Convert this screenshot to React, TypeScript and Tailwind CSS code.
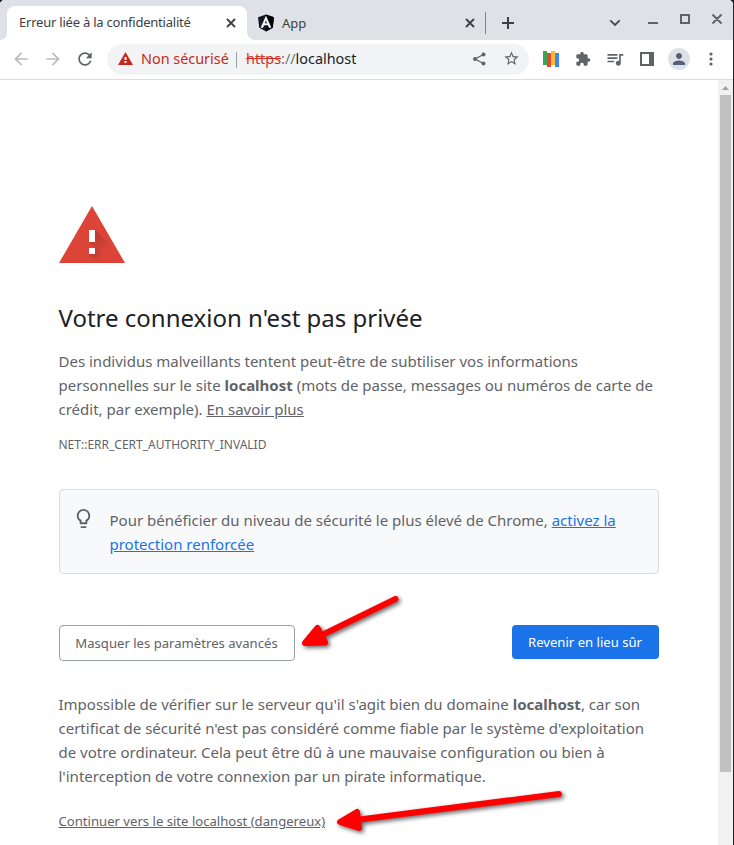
import type { ReactNode } from "react";

type IconProps = { d: string; size: number; className?: string };

function Icon({ d, size, className }: IconProps) {
  return (
    <svg width={size} height={size} viewBox="0 0 24 24" fill="currentColor" className={className}>
      <path d={d} />
    </svg>
  );
}

const icons = {
  back: "M20 11H7.83l5.59-5.59L12 4l-8 8 8 8 1.41-1.41L7.83 13H20v-2z",
  forward: "M12 4l-1.41 1.41L16.17 11H4v2h12.17l-5.58 5.59L12 20l8-8z",
  reload:
    "M17.65 6.35C16.2 4.9 14.21 4 12 4c-4.42 0-7.99 3.58-7.99 8s3.57 8 7.99 8c3.73 0 6.84-2.55 7.73-6h-2.08c-.82 2.33-3.04 4-5.65 4-3.31 0-6-2.69-6-6s2.69-6 6-6c1.66 0 3.14.69 4.22 1.78L13 11h7V4l-2.35 2.35z",
  star: "M22 9.24l-7.19-.62L12 2 9.19 8.63 2 9.24l5.46 4.73L5.82 21 12 17.27 18.18 21l-1.63-7.03L22 9.24zM12 15.4l-3.76 2.27 1-4.28-3.32-2.88 4.38-.38L12 6.1l1.71 4.04 4.38.38-3.32 2.88 1 4.28L12 15.4z",
  extension:
    "M20.5 11H19V7c0-1.1-.9-2-2-2h-4V3.5C13 2.12 11.88 1 10.5 1S8 2.12 8 3.5V5H4c-1.1 0-1.99.9-1.99 2v3.8H3.5c1.49 0 2.7 1.21 2.7 2.7s-1.21 2.7-2.7 2.7H2V20c0 1.1.9 2 2 2h3.8v-1.5c0-1.49 1.21-2.7 2.7-2.7 1.49 0 2.7 1.21 2.7 2.7V22H17c1.1 0 2-.9 2-2v-4h1.5c1.38 0 2.5-1.12 2.5-2.5S21.88 11 20.5 11z",
  queue:
    "M15 6H3v2h12V6zm0 4H3v2h12v-2zM3 16h8v-2H3v2zM17 6v8.18c-.31-.11-.65-.18-1-.18-1.66 0-3 1.34-3 3s1.34 3 3 3 3-1.34 3-3V8h3V6h-5z",
  person:
    "M12 12c2.21 0 4-1.79 4-4s-1.79-4-4-4-4 1.79-4 4 1.79 4 4 4zm0 2c-2.67 0-8 1.34-8 4v2h16v-2c0-2.66-5.33-4-8-4z",
  bulb: "M9 21c0 .55.45 1 1 1h4c.55 0 1-.45 1-1v-1H9v1zm3-19C8.14 2 5 5.14 5 9c0 2.38 1.19 4.47 3 5.74V17c0 .55.45 1 1 1h6c.55 0 1-.45 1-1v-2.26c1.81-1.27 3-3.36 3-5.74 0-3.86-3.14-7-7-7zm2.85 11.1l-.85.6V16h-4v-2.3l-.85-.6C7.8 12.16 7 10.63 7 9c0-2.76 2.24-5 5-5s5 2.24 5 5c0 1.63-.8 3.16-2.15 4.1z",
};

function Cross({ size, width }: { size: number; width: number }) {
  return (
    <svg width={size} height={size} viewBox={`0 0 ${size} ${size}`} stroke="currentColor" strokeWidth={width}>
      <path d={`M1 1L${size - 1} ${size - 1}M${size - 1} 1L1 ${size - 1}`} />
    </svg>
  );
}

function Slot({ children }: { children: ReactNode }) {
  return <div className="flex w-8 shrink-0 items-center justify-center">{children}</div>;
}

function TabStrip() {
  return (
    <div className="flex h-10 shrink-0 bg-[#dee1e6] text-[#3c4043]">
      <div className="flex w-[7px] bg-white">
        <div className="flex-1 rounded-br-lg bg-[#dee1e6]" />
      </div>
      <div className="flex w-60 bg-[#dee1e6] pt-1.5">
        <div className="flex flex-1 items-center justify-between rounded-t-lg bg-white pr-[11px] pl-3">
          <span className="text-[13px] tracking-[-0.22px] whitespace-nowrap">Erreur liée à la confidentialité</span>
          <Cross size={10} width={1.8} />
        </div>
      </div>
      <div className="flex flex-1 bg-white">
        <div className="flex flex-1 rounded-bl-lg bg-[#dee1e6] pt-1.5">
          <div className="flex w-[239px] items-center border-r border-[#808488] pr-2.5 pl-2.5 [border-image:linear-gradient(to_bottom,transparent_7px,#808488_7px,#808488_27px,transparent_27px)_1]">
            <svg width="18" height="18" viewBox="20 25 210 210">
              <path fill="#111827" d="M125 30 31.9 63.2l14.2 123.1L125 230l78.9-43.7 14.2-123.1z" />
              <path fill="#000000" d="M125 30v200l78.9-43.7 14.2-123.1z" />
              <path
                fill="#ffffff"
                stroke="#ffffff"
                strokeWidth="6"
                d="M125 52.1L66.8 182.6h21.7l11.7-29.2h49.4l11.7 29.2H183L125 52.1zm17 83.3h-34l17-40.9 17 40.9z"
              />
            </svg>
            <span className="mt-px ml-[7px] flex-1 text-[13px]">App</span>
            <Cross size={10} width={1.8} />
          </div>
          <div className="flex flex-1 items-center pl-4">
            <svg width="12" height="12" viewBox="0 0 12 12" stroke="#3c4043" strokeWidth="2">
              <path d="M6 0v12M0 6h12" />
            </svg>
          </div>
          <div className="flex h-[34px] w-[134px] text-[#5f6368]">
            <svg width="134" height="34" fill="none" stroke="currentColor" strokeWidth="2">
              <path stroke="#45494d" strokeWidth="1.8" d="M11.3 14.3l4.7 4.7 4.7-4.7" />
              <path d="M49 17h10M82 9h8v8h-8zM113.500 8.500l9 9M122.500 8.500l-9 9" />
            </svg>
          </div>
        </div>
      </div>
    </div>
  );
}

function Toolbar() {
  return (
    <div className="flex h-10 shrink-0 border-b border-[#dadce0] bg-white pb-px pl-[5px] text-[#5f6368]">
      <Slot>
        <Icon d={icons.back} size={20} className="text-[#babcbe]" />
      </Slot>
      <Slot>
        <Icon d={icons.forward} size={20} className="text-[#babcbe]" />
      </Slot>
      <Slot>
        <Icon d={icons.reload} size={20} />
      </Slot>
      <div className="mt-1 ml-1.5 flex h-[31px] w-[422px] items-center rounded-full bg-[#f1f3f4] pr-2.5 pl-[11px] text-[14.400px]">
        <svg width="15" height="13" viewBox="0 0 15 13" className="-mt-[3px]">
          <path d="M7.500 0L15 13H0z" fill="#c5281c" />
          <path d="M6.500 5h2v3h-2zM6.500 9h2v2h-2z" fill="#fff" />
        </svg>
        <span className="-mt-0.5 ml-2 w-[95px] whitespace-nowrap text-[#c5281c]">Non sécurisé</span>
        <span className="h-4 w-px bg-[#9aa0a6]" />
        <span className="-mt-0.5 ml-[9px] flex-1 text-[#202124]">
          <span className="text-[#d93025] line-through">https</span>
          <span className="text-[#6f7377]">://</span>localhost
        </span>
        <svg width="14" height="14" viewBox="0 0 14 14" className="-mt-0.5 mr-[17px]" fill="currentColor">
          <path d="M11.500 2.500L3 7l8.500 4.500" fill="none" stroke="currentColor" strokeWidth="1.300" />
          <circle cx="3" cy="7" r="2" />
          <circle cx="11.500" cy="2.500" r="2" />
          <circle cx="11.500" cy="11.500" r="2" />
        </svg>
        <Icon d={icons.star} size={17} className="-mt-0.5 -mr-px" />
      </div>
      <div className="ml-1.5 flex">
        <Slot>
          <svg width="16" height="16">
            <path fill="#34a853" d="M0 0h4v14H0z" />
            <path fill="#ea4335" d="M4 2h4v14H4z" />
            <path fill="#fbbc2c" d="M8 0h4v14H8z" />
            <path fill="#4285f4" d="M12 2h4v14h-4z" />
          </svg>
        </Slot>
        <Slot>
          <Icon d={icons.extension} size={16} />
        </Slot>
        <Slot>
          <Icon d={icons.queue} size={20} />
        </Slot>
        <Slot>
          <svg width="14" height="14">
            <path fill="currentColor" fillRule="evenodd" d="M0 0h14v14H0zM2 2v10h7V2z" />
          </svg>
        </Slot>
        <Slot>
          <div className="flex size-[22px] items-center justify-center rounded-full bg-[#dee1e6] text-[#536079]">
            <Icon d={icons.person} size={18} />
          </div>
        </Slot>
        <Slot>
          <svg width="4" height="16" fill="currentColor">
            <circle cx="2" cy="3" r="1.600" />
            <circle cx="2" cy="8" r="1.600" />
            <circle cx="2" cy="13" r="1.600" />
          </svg>
        </Slot>
      </div>
    </div>
  );
}

function WarningTriangle() {
  return (
    <svg width="72" height="72" viewBox="0 0 72 72" className="-ml-[2.500px]">
      <defs>
        <linearGradient id="shade" gradientUnits="userSpaceOnUse" x1="36" y1="34" x2="52" y2="50">
          <stop offset="0" stopColor="#000" stopOpacity="0.16" />
          <stop offset="1" stopColor="#000" stopOpacity="0" />
        </linearGradient>
        <linearGradient id="shadeDot" gradientUnits="userSpaceOnUse" x1="36" y1="50" x2="45" y2="59">
          <stop offset="0" stopColor="#000" stopOpacity="0.16" />
          <stop offset="1" stopColor="#000" stopOpacity="0" />
        </linearGradient>
        <clipPath id="tri">
          <path d="M3 63h66L36 6z" />
        </clipPath>
      </defs>
      <path d="M3 63h66L36 6z" fill="#db4437" />
      <g clipPath="url(#tri)">
        <path d="M39 30l33 33H54L33 42z" fill="url(#shade)" />
        <path d="M39 48l15 15H42l-9-9z" fill="url(#shadeDot)" />
      </g>
      <path d="M33 30h6v12h-6zM33 48h6v6h-6z" fill="#fff" />
    </svg>
  );
}

function Interstitial() {
  return (
    <main className="ml-[58.500px] w-[600px] pt-[120px] text-[15px] leading-6 text-[#5f6368]">
      <WarningTriangle />
      <h1 className="mt-[31px] text-[24px] leading-[30px] text-[#202124]">Votre connexion n'est pas privée</h1>
      <p className="mt-4">
        Des individus malveillants tentent peut-être de subtiliser vos informations
        <br />
        personnelles sur le site <strong>localhost</strong> (mots de passe, messages ou numéros de carte de
        <br />
        crédit, par exemple). <a className="underline">En savoir plus</a>
      </p>
      <p className="mt-3.5 text-[12px] leading-[19px]">NET::ERR_CERT_AUTHORITY_INVALID</p>
      <div className="mt-[35px] flex h-[85px] rounded-[4px] border border-[#dadce0] bg-[#f8f9fa] pt-[18px] pl-3">
        <Icon d={icons.bulb} size={23} className="-mt-px" />
        <p className="ml-[15px]">
          Pour bénéficier du niveau de sécurité le plus élevé de Chrome,{" "}
          <a className="text-[#1a73e8] underline">activez la</a>
          <br />
          <a className="text-[#1a73e8] underline">protection renforcée</a>
        </p>
      </div>
      <div className="mt-[51px] flex items-start justify-between text-[13.125px]">
        <button className="h-9 w-[236px] rounded-[4px] border border-[#9aa0a6] whitespace-nowrap">
          Masquer les paramètres avancés
        </button>
        <button className="h-[34px] w-[147px] rounded-[4px] bg-[#1a73e8] whitespace-nowrap text-white">
          Revenir en lieu sûr
        </button>
      </div>
      <p className="mt-[31px]">
        Impossible de vérifier sur le serveur qu'il s'agit bien du domaine <strong>localhost</strong>, car son
        <br />
        certificat de sécurité n'est pas considéré comme fiable par le système d'exploitation
        <br />
        de votre ordinateur. Cela peut être dû à une mauvaise configuration ou bien à
        <br />
        l'interception de votre connexion par un pirate informatique.
      </p>
      <p className="mt-[21px] text-[13.125px]">
        <a className="underline">Continuer vers le site localhost (dangereux)</a>
      </p>
    </main>
  );
}

function Scrollbar() {
  return (
    <div className="flex w-[15px] shrink-0 flex-col items-center bg-[#f1f1f1]">
      <svg width="15" height="15">
        <path d="M4 10l3.500-4 3.500 4z" fill="#a3a3a3" />
      </svg>
      <div className="h-[677px] w-[11px] bg-[#c1c1c1]" />
    </div>
  );
}

function Arrows() {
  return (
    <svg
      width="734"
      height="845"
      className="pointer-events-none absolute inset-0 drop-shadow-[2px_2px_2px_rgba(0,0,0,0.6)]"
      fill="#ff0000"
      stroke="#ff0000"
      strokeLinecap="round"
      strokeLinejoin="round"
      strokeWidth="6"
    >
      <path d="M395.500 599L320 636" />
      <path d="M305 643L317.500 628L325 642.500z" />
      <path d="M559 794L356 820" />
      <path d="M340 822L357 812L359 828z" />
    </svg>
  );
}

export default function App() {
  return (
    <div className="relative flex h-[845px] w-[734px] overflow-hidden bg-[#20242b] font-['Noto_Sans',sans-serif]">
      <div className="flex w-[733px] flex-col overflow-hidden rounded-t-[5px] bg-white">
        <TabStrip />
        <Toolbar />
        <div className="flex min-h-0 flex-1">
          <div className="min-w-0 flex-1">
            <Interstitial />
          </div>
          <Scrollbar />
        </div>
      </div>
      <Arrows />
    </div>
  );
}
